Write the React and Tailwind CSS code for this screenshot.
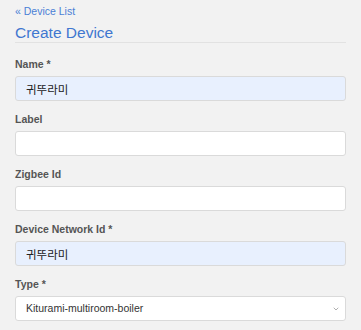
import { ChevronDown } from "lucide-react";

const fields = [
  { label: "Name *", value: "귀뚜라미", filled: true },
  { label: "Label", value: "" },
  { label: "Zigbee Id", value: "" },
  { label: "Device Network Id *", value: "귀뚜라미", filled: true },
];

function Field({ label, value, filled }) {
  return (
    <div className="mb-[10px]">
      <label className="block text-[10.5px] font-bold leading-[16px] mb-[4px] text-[#555]">{label}</label>
      <input
        readOnly
        value={value}
        className={`block w-full h-[25px] px-[10px] rounded-[3px] border border-[#dadada] text-[11.5px] text-[#222] outline-none ${filled ? "bg-[#e8f0fe]" : "bg-white"}`}
        style={{ fontFamily: '"Liberation Sans", "Noto Sans CJK KR", sans-serif' }}
      />
    </div>
  );
}

export default function App() {
  return (
    <div className="min-h-screen bg-[#f2f2f2] px-[15px] pt-[4px]" style={{ fontFamily: '"Liberation Sans", "Noto Sans CJK KR", sans-serif' }}>
      <a href="#" className="block text-[10.5px] leading-[14px] text-[#4a7fd6]">« Device List</a>
      <h3 className="text-[15.5px] leading-[18px] mt-[6px] text-[#3f77d0]">Create Device</h3>
      <hr className="border-0 border-t border-[#e2e2e2] mb-[13px]" />
      {fields.map((f) => (
        <Field key={f.label} {...f} />
      ))}
      <div>
        <label className="block text-[10.5px] font-bold leading-[16px] mb-[4px] text-[#555]">Type *</label>
        <div className="relative h-[25px] rounded-[3px] border border-[#dadada] bg-white flex items-center px-[10px] text-[10.5px] text-[#333]">
          Kiturami-multiroom-boiler
          <ChevronDown className="absolute right-[5px] w-[8px] h-[8px] text-[#888]" strokeWidth={2} />
        </div>
      </div>
    </div>
  );
}
